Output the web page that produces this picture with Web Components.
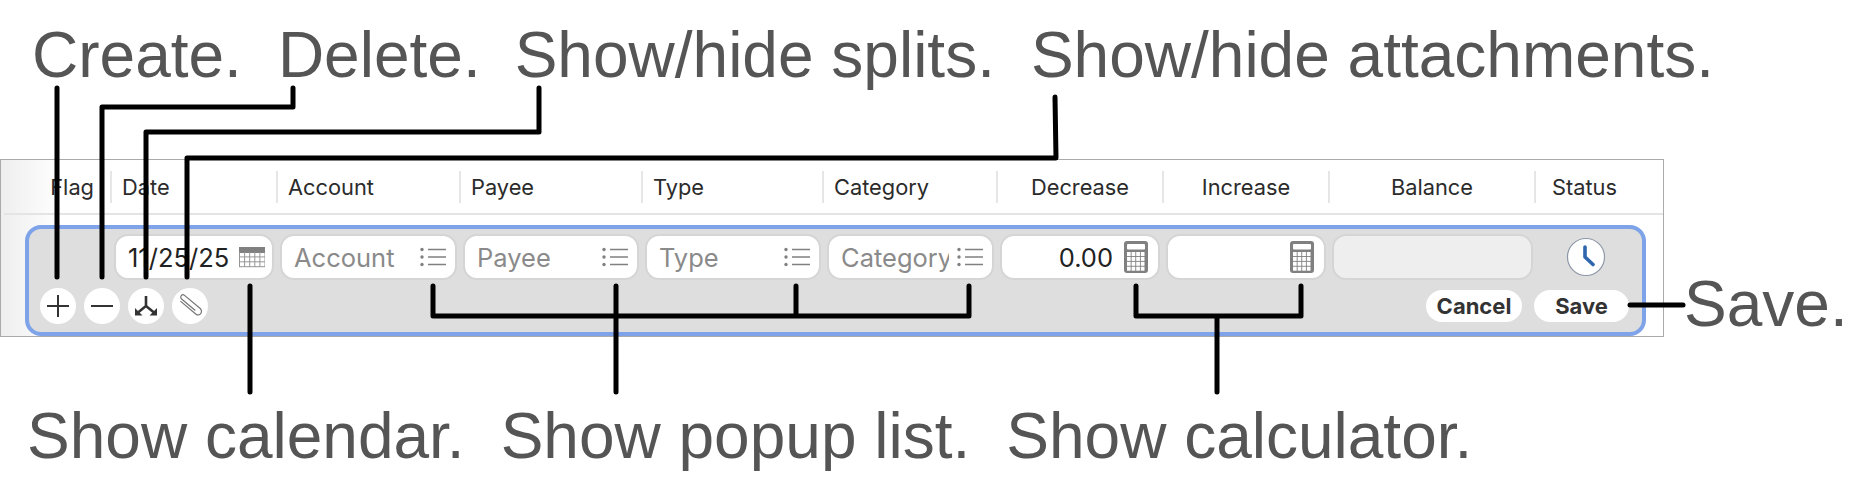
<!DOCTYPE html>
<html lang="en">
<head>
<meta charset="utf-8">
<title>Transaction form callouts</title>
<style>
  html, body { margin: 0; background: #fff; }
</style>
</head>
<body>
<callout-diagram>
  <callout-label slot="top">Create.</callout-label>
  <callout-label slot="top" style="margin-left:36px">Delete.</callout-label>
  <callout-label slot="top" style="margin-left:34px">Show/hide splits.</callout-label>
  <callout-label slot="top" style="margin-left:36px">Show/hide attachments.</callout-label>

  <register-table slot="table">
    <header-cell slot="header" pad="right">Flag</header-cell>
    <header-cell slot="header" rule>Date</header-cell>
    <header-cell slot="header" rule>Account</header-cell>
    <header-cell slot="header" rule>Payee</header-cell>
    <header-cell slot="header" rule>Type</header-cell>
    <header-cell slot="header" rule>Category</header-cell>
    <header-cell slot="header" rule pad="center">Decrease</header-cell>
    <header-cell slot="header" rule pad="center">Increase</header-cell>
    <header-cell slot="header" rule pad="center">Balance</header-cell>
    <header-cell slot="header" rule pad="status">Status</header-cell>

    <form-field slot="fields" style="width:160px;--pad-right:7px">11/25/25<form-icon slot="icon" name="calendar"></form-icon></form-field>
    <form-field slot="fields" style="width:177px" placeholder>Account<form-icon slot="icon" name="list"></form-icon></form-field>
    <form-field slot="fields" style="width:176px" placeholder>Payee<form-icon slot="icon" name="list"></form-icon></form-field>
    <form-field slot="fields" style="width:176px" placeholder>Type<form-icon slot="icon" name="list"></form-icon></form-field>
    <form-field slot="fields" style="width:167px" placeholder>Category<form-icon slot="icon" name="list"></form-icon></form-field>
    <form-field slot="fields" style="width:160px" number>0.00<form-icon slot="icon" name="calculator"></form-icon></form-field>
    <form-field slot="fields" style="width:160px" number><form-icon slot="icon" name="calculator"></form-icon></form-field>
    <form-field slot="fields" style="width:201px" disabled></form-field>
    <form-icon slot="status" name="clock"></form-icon>

    <round-button slot="tools"><form-icon name="plus"></form-icon></round-button>
    <round-button slot="tools"><form-icon name="minus"></form-icon></round-button>
    <round-button slot="tools"><form-icon name="split"></form-icon></round-button>
    <round-button slot="tools"><form-icon name="clip"></form-icon></round-button>

    <pill-button slot="actions" style="width:96px">Cancel</pill-button>
    <pill-button slot="actions" style="width:95px">Save</pill-button>
  </register-table>
  <callout-label slot="side">Save.</callout-label>

  <callout-label slot="bottom">Show calendar.</callout-label>
  <callout-label slot="bottom" style="margin-left:36px">Show popup list.</callout-label>
  <callout-label slot="bottom" style="margin-left:36px">Show calculator.</callout-label>

  <callout-lines slot="lines"></callout-lines>
</callout-diagram>

<script>
class CalloutDiagram extends HTMLElement {
  constructor() {
    super();
    this.attachShadow({ mode: "open" });
    this.shadowRoot.innerHTML = `
      <style>
        :host {
          display: block;
          position: relative;
          width: 1850px;
          height: 500px;
          overflow: hidden;
          font-family: "Liberation Sans", Arial, sans-serif;
        }
        .top {
          display: flex;
          box-sizing: border-box;
          height: 159px;
          padding: 19px 0 0 32px;
        }
        .middle {
          display: flex;
          align-items: flex-end;
          gap: 20px;
          height: 178px;
        }
        .side { display: block; margin-bottom: -3px; }
        .bottom {
          display: flex;
          padding: 63px 0 0 27px;
        }
      </style>
      <div class="top"><slot name="top"></slot></div>
      <div class="middle">
        <slot name="table"></slot>
        <div class="side"><slot name="side"></slot></div>
      </div>
      <div class="bottom"><slot name="bottom"></slot></div>
      <slot name="lines"></slot>
    `;
  }
}

class CalloutLabel extends HTMLElement {
  constructor() {
    super();
    this.attachShadow({ mode: "open" });
    this.shadowRoot.innerHTML = `
      <style>
        :host {
          display: block;
          flex: none;
          font-family: "Liberation Sans", Arial, sans-serif;
          font-size: 64px;
          line-height: 72px;
          color: #555;
          white-space: nowrap;
        }
      </style>
      <slot></slot>
    `;
  }
}

class RegisterTable extends HTMLElement {
  constructor() {
    super();
    this.attachShadow({ mode: "open" });
    this.shadowRoot.innerHTML = `
      <style>
        :host {
          display: block;
          flex: none;
          box-sizing: border-box;
          width: 1664px;
          height: 178px;
          border: 1px solid #aaa;
          background: linear-gradient(90deg, #eee, #fff 60px);
          font-family: Inter, "Liberation Sans", sans-serif;
        }
        .header {
          display: grid;
          grid-template-columns: 106px 166px 183px 182px 181px 174px 166px 166px 206px 129px;
          align-items: center;
          height: 53px;
          margin-left: 3px;
          border-bottom: 2px solid #e4e4e4;
        }
        .form {
          box-sizing: border-box;
          width: 1621px;
          height: 111px;
          margin: 10px 0 0 24px;
          padding-top: 5px;
          border: 4px solid #7ea3e8;
          border-radius: 16px;
          background: #dedede;
        }
        .fields {
          display: flex;
          gap: 6px;
          height: 46px;
          padding-left: 85px;
        }
        .status { display: block; margin: 3px 0 0 27px; }
        .tools {
          display: flex;
          align-items: center;
          justify-content: space-between;
          height: 36px;
          margin-top: 8px;
          padding: 0 13px 0 11px;
        }
        .left, .right { display: flex; align-items: center; }
        .left { gap: 8px; }
        .right { gap: 12px; }
      </style>
      <div class="header"><slot name="header"></slot></div>
      <div class="form">
        <div class="fields">
          <slot name="fields"></slot>
          <div class="status"><slot name="status"></slot></div>
        </div>
        <div class="tools">
          <div class="left"><slot name="tools"></slot></div>
          <div class="right"><slot name="actions"></slot></div>
        </div>
      </div>
    `;
  }
}

class HeaderCell extends HTMLElement {
  constructor() {
    super();
    this.attachShadow({ mode: "open" });
    this.shadowRoot.innerHTML = `
      <style>
        :host {
          display: block;
          box-sizing: border-box;
          height: 32px;
          padding-left: 10px;
          font-size: 21.8px;
          line-height: 33px;
          color: #2b2b2b;
          white-space: nowrap;
        }
        :host([rule]) { border-left: 2px solid #e6e6e6; }
        :host([pad="right"]) { padding: 0 16px 0 0; text-align: right; }
        :host([pad="center"]) { padding: 0; text-align: center; }
        :host([pad="status"]) { padding-left: 16px; }
      </style>
      <slot></slot>
    `;
  }
}

class FormField extends HTMLElement {
  constructor() {
    super();
    this.attachShadow({ mode: "open" });
    this.shadowRoot.innerHTML = `
      <style>
        :host {
          display: flex;
          align-items: center;
          flex: none;
          box-sizing: border-box;
          height: 46px;
          padding: 0 var(--pad-right, 9px) 0 12px;
          border: 2px solid #d5d5d5;
          border-radius: 14px;
          background: #fff;
          font-size: 25.5px;
          color: #222;
        }
        :host([placeholder]) { color: #8a8a8a; }
        :host([disabled]) { background: #eee; }
        :host([number]) { --pad-right: 10px; }
        .text {
          flex: 1;
          min-width: 0;
          margin-right: 8px;
          padding-top: 1px;
          overflow: hidden;
          white-space: nowrap;
        }
        :host([number]) .text { margin-right: 11px; text-align: right; }
      </style>
      <span class="text"><slot></slot></span>
      <slot name="icon"></slot>
    `;
  }
}

class RoundButton extends HTMLElement {
  constructor() {
    super();
    this.attachShadow({ mode: "open" });
    this.shadowRoot.innerHTML = `
      <style>
        :host {
          display: flex;
          align-items: center;
          justify-content: center;
          width: 36px;
          height: 36px;
          border-radius: 50%;
          background: #fff;
        }
      </style>
      <slot></slot>
    `;
  }
}

class PillButton extends HTMLElement {
  constructor() {
    super();
    this.attachShadow({ mode: "open" });
    this.shadowRoot.innerHTML = `
      <style>
        :host {
          display: block;
          height: 32px;
          border-radius: 16px;
          background: #fff;
          font-size: 22px;
          font-weight: 700;
          line-height: 33px;
          text-align: center;
          color: #333;
        }
      </style>
      <slot></slot>
    `;
  }
}

// icon artwork, all drawn at 1 unit = 1px
function calendarCells() {
  let s = `<rect width="26" height="6" fill="#808080"/>`;
  for (let x = 0; x <= 5; x++) s += `<path d="M${x * 5.1 + 0.5} 5V20" stroke="#969696"/>`;
  for (let y = 1; y <= 3; y++) s += `<path d="M0 ${y * 4.9 + 5}H26" stroke="#969696"/>`;
  return s;
}

function calculatorCells() {
  let s = `<rect width="24" height="32" rx="3" fill="#808080"/><rect x="3" y="3" width="18" height="5.5" rx="1" fill="#fff"/>`;
  for (let r = 0; r < 4; r++) {
    for (let c = 0; c < 4; c++) {
      s += `<rect x="${3 + c * 4.6}" y="${11 + r * 4.9}" width="3.7" height="4" fill="#fff"/>`;
    }
  }
  return s;
}

const ICONS = {
  calendar: [26, 21, calendarCells()],
  calculator: [24, 32, calculatorCells()],
  list: [26, 20, `
    <g fill="#808080"><circle cx="2" cy="2.5" r="1.7"/><circle cx="2" cy="10" r="1.7"/><circle cx="2" cy="17.5" r="1.7"/></g>
    <path d="M8 2.5H26M8 10H26M8 17.5H26" stroke="#808080" stroke-width="1.5"/>`],
  plus: [22, 22, `<path d="M0 11H22M11 0V22" stroke="#333" stroke-width="2"/>`],
  minus: [22, 22, `<path d="M0 11H22" stroke="#333" stroke-width="2"/>`],
  split: [36, 36, `
    <path d="M18 8V18L10 24.5M18 18L26 24.5" fill="none" stroke="#333" stroke-width="2.6"/>
    <path d="M7 20V27.5H14.5ZM29 20V27.5H21.5Z" fill="#333"/>`],
  clip: [36, 36, `
    <path d="M-10.5 2.4H9.5a3.5 3.5 0 0 0 0-7H-11a2.3 2.3 0 0 0 0 4.6H7" transform="translate(18 18) rotate(40)" fill="none" stroke="#757575" stroke-width="1.2"/>`],
  clock: [40, 40, `
    <circle cx="20" cy="20" r="18.5" fill="#fff" stroke="#8d97a8" stroke-width="1.2"/>
    <path d="M19 10V20L27 27.5" fill="none" stroke="#2f66ad" stroke-width="3.6" stroke-linecap="round" stroke-linejoin="round"/>`],
};

class FormIcon extends HTMLElement {
  constructor() {
    super();
    this.attachShadow({ mode: "open" });
  }

  connectedCallback() {
    const [w, h, art] = ICONS[this.getAttribute("name")];
    this.shadowRoot.innerHTML = `
      <style>
        :host { display: block; flex: none; line-height: 0; }
        svg { display: block; }
      </style>
      <svg width="${w}" height="${h}" viewBox="0 0 ${w} ${h}" xmlns="http://www.w3.org/2000/svg">${art}</svg>
    `;
  }
}

// the black callout strokes lie over everything else
class CalloutLines extends HTMLElement {
  constructor() {
    super();
    this.attachShadow({ mode: "open" });
    this.shadowRoot.innerHTML = `
      <style>
        :host { position: absolute; inset: 0; pointer-events: none; }
        svg { display: block; }
        path { fill: none; stroke: #000; stroke-width: 5; stroke-linecap: round; stroke-linejoin: round; }
      </style>
      <svg width="1850" height="500" viewBox="0 0 1850 500" xmlns="http://www.w3.org/2000/svg">
        <path d="M57 88V277"/>
        <path d="M293 88V107H102V277"/>
        <path d="M539 88V132H146V277"/>
        <path d="M1055 97L1056 158H187V277"/>
        <path d="M250 286V392"/>
        <path d="M433 286V316H969V286M796 286V316"/>
        <path d="M616 286V392"/>
        <path d="M1136 286V316H1301V286M1217 316V392"/>
        <path d="M1630 305H1683"/>
      </svg>
    `;
  }
}

customElements.define("callout-diagram", CalloutDiagram);
customElements.define("callout-label", CalloutLabel);
customElements.define("register-table", RegisterTable);
customElements.define("header-cell", HeaderCell);
customElements.define("form-field", FormField);
customElements.define("round-button", RoundButton);
customElements.define("pill-button", PillButton);
customElements.define("form-icon", FormIcon);
customElements.define("callout-lines", CalloutLines);
</script>
</body>
</html>
